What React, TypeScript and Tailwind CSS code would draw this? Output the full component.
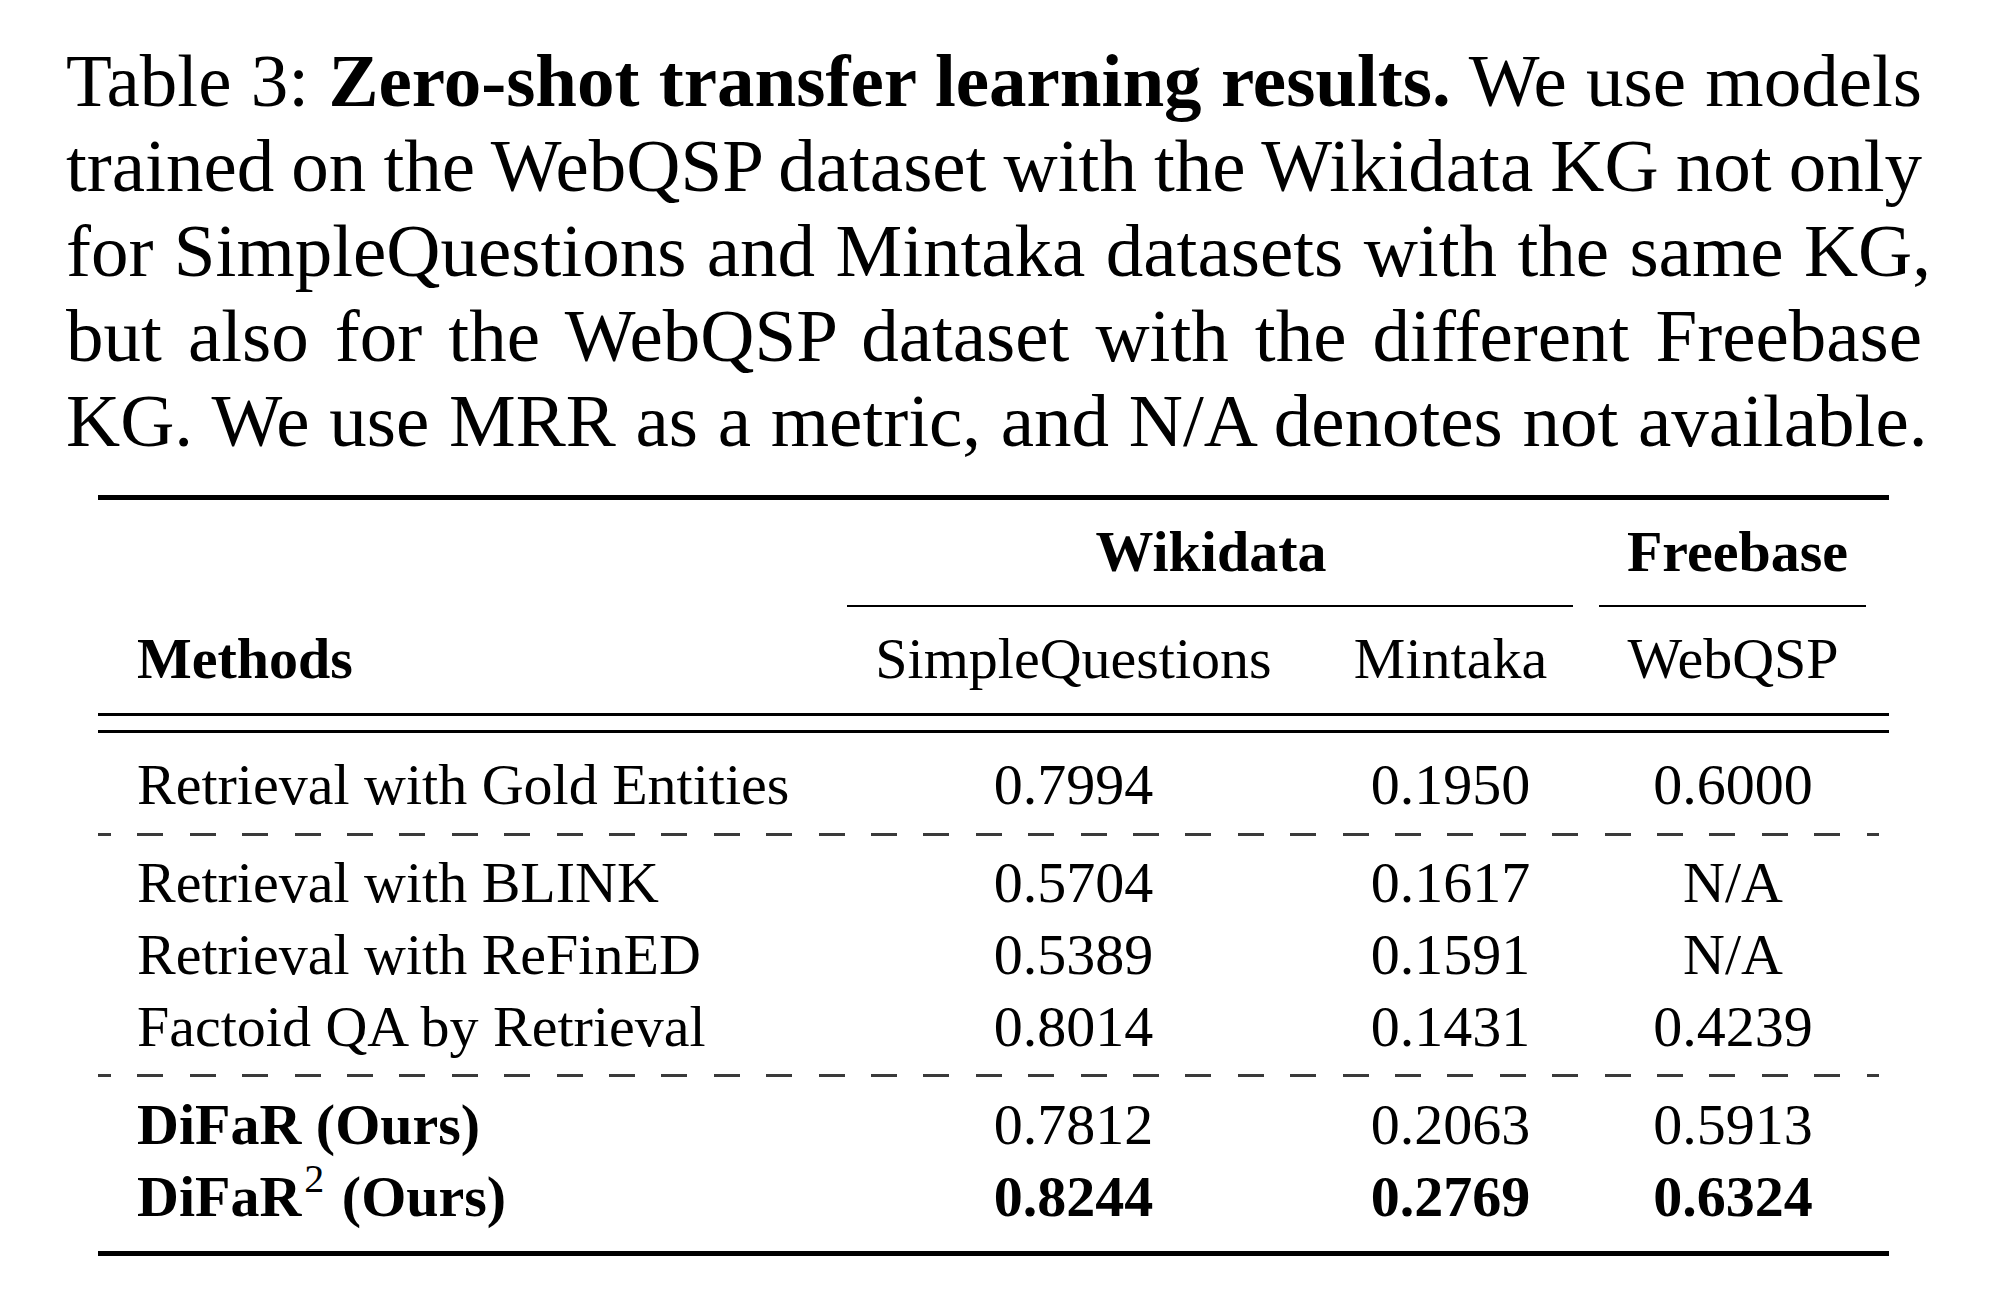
import React from 'react';

type Row = {
  method: React.ReactNode;
  sq: string;
  mi: string;
  wq: string;
  bold?: boolean;
};

const cols = 'grid grid-cols-[736px_479px_275px_301px]';

const gold: Row[] = [
  { method: 'Retrieval with Gold Entities', sq: '0.7994', mi: '0.1950', wq: '0.6000' },
];

const baselines: Row[] = [
  { method: 'Retrieval with BLINK', sq: '0.5704', mi: '0.1617', wq: 'N/A' },
  { method: 'Retrieval with ReFinED', sq: '0.5389', mi: '0.1591', wq: 'N/A' },
  { method: 'Factoid QA by Retrieval', sq: '0.8014', mi: '0.1431', wq: '0.4239' },
];

const ours: Row[] = [
  { method: <span className="font-bold">DiFaR (Ours)</span>, sq: '0.7812', mi: '0.2063', wq: '0.5913' },
  {
    method: (
      <span className="font-bold">
        DiFaR
        <span className="relative -top-[24px] text-[40px] font-normal leading-none ml-[3px] mr-[3px]">2</span> (Ours)
      </span>
    ),
    sq: '0.8244',
    mi: '0.2769',
    wq: '0.6324',
    bold: true,
  },
];

const DataRow = ({ row }: { row: Row }) => (
  <div className={`${cols} h-[72px] leading-[72px] whitespace-nowrap`}>
    <div className="pl-[39px]">{row.method}</div>
    <div className={`text-center ${row.bold ? 'font-bold' : ''}`}>{row.sq}</div>
    <div className={`text-center ${row.bold ? 'font-bold' : ''}`}>{row.mi}</div>
    <div className={`text-center pr-[11px] ${row.bold ? 'font-bold' : ''}`}>{row.wq}</div>
  </div>
);

const Dashed = () => (
  <div className="h-[3px] mr-[10px] bg-[repeating-linear-gradient(90deg,#3a3a3a_0_13px,transparent_13px_39.4px,#3a3a3a_39.4px_52.4px)]" />
);

// justified caption lines; the last one sits at its natural width
const Line = ({ children, last }: { children: React.ReactNode; last?: boolean }) => (
  <div
    className={`whitespace-nowrap ${
      last ? 'text-left [word-spacing:1px]' : 'text-justify [text-align-last:justify] [word-spacing:-3px]'
    }`}
  >
    {children}
  </div>
);

const App: React.FC = () => {
  return (
    <div className="w-[2000px] h-[1303px] bg-white text-black font-['Liberation_Serif',serif] overflow-hidden">
      {/* Caption */}
      <div className="ml-[66px] w-[1856px] pt-[38px] text-[75px] leading-[85px]">
        <Line>
          Table 3: <span className="font-bold">Zero-shot transfer learning results.</span> We use models
        </Line>
        <Line>trained on the WebQSP dataset with the Wikidata KG not only</Line>
        <Line>
          for SimpleQuestions and Mintaka datasets with the same KG<span className="-mr-[9px]">,</span>
        </Line>
        <Line>but also for the WebQSP dataset with the different Freebase</Line>
        <Line last>KG. We use MRR as a metric, and N/A denotes not available.</Line>
      </div>

      {/* Table */}
      <div className="ml-[98px] w-[1791px] mt-[32px] text-[58px]">
        <div className="h-[5px] bg-black" />

        <div className={`${cols} h-[105px] pt-[16px] leading-[72px] font-bold whitespace-nowrap`}>
          <div />
          <div className="col-span-2 text-center">Wikidata</div>
          <div className="text-center pr-[2px]">Freebase</div>
        </div>

        <div className={`${cols} h-[2px]`}>
          <div />
          <div className="col-span-2 ml-[13px] mr-[15px] bg-black" />
          <div className="ml-[11px] mr-[23px] bg-black" />
        </div>

        <div className={`${cols} h-[106px] pt-[16px] leading-[72px] whitespace-nowrap`}>
          <div className="pl-[39px] font-bold">Methods</div>
          <div className="text-center">SimpleQuestions</div>
          <div className="text-center">Mintaka</div>
          <div className="text-center pr-[11px]">WebQSP</div>
        </div>

        <div className="h-[3px] bg-black" />
        <div className="h-[3px] mt-[14px] bg-black" />

        <div className="pt-[16px] pb-[12px]">
          {gold.map((r, i) => (
            <DataRow key={i} row={r} />
          ))}
        </div>

        <Dashed />

        <div className="pt-[11px] pb-[11px]">
          {baselines.map((r, i) => (
            <DataRow key={i} row={r} />
          ))}
        </div>

        <Dashed />

        <div className="pt-[12px] pb-[18px]">
          {ours.map((r, i) => (
            <DataRow key={i} row={r} />
          ))}
        </div>

        <div className="h-[5px] bg-black" />
      </div>
    </div>
  );
};

export default App;
